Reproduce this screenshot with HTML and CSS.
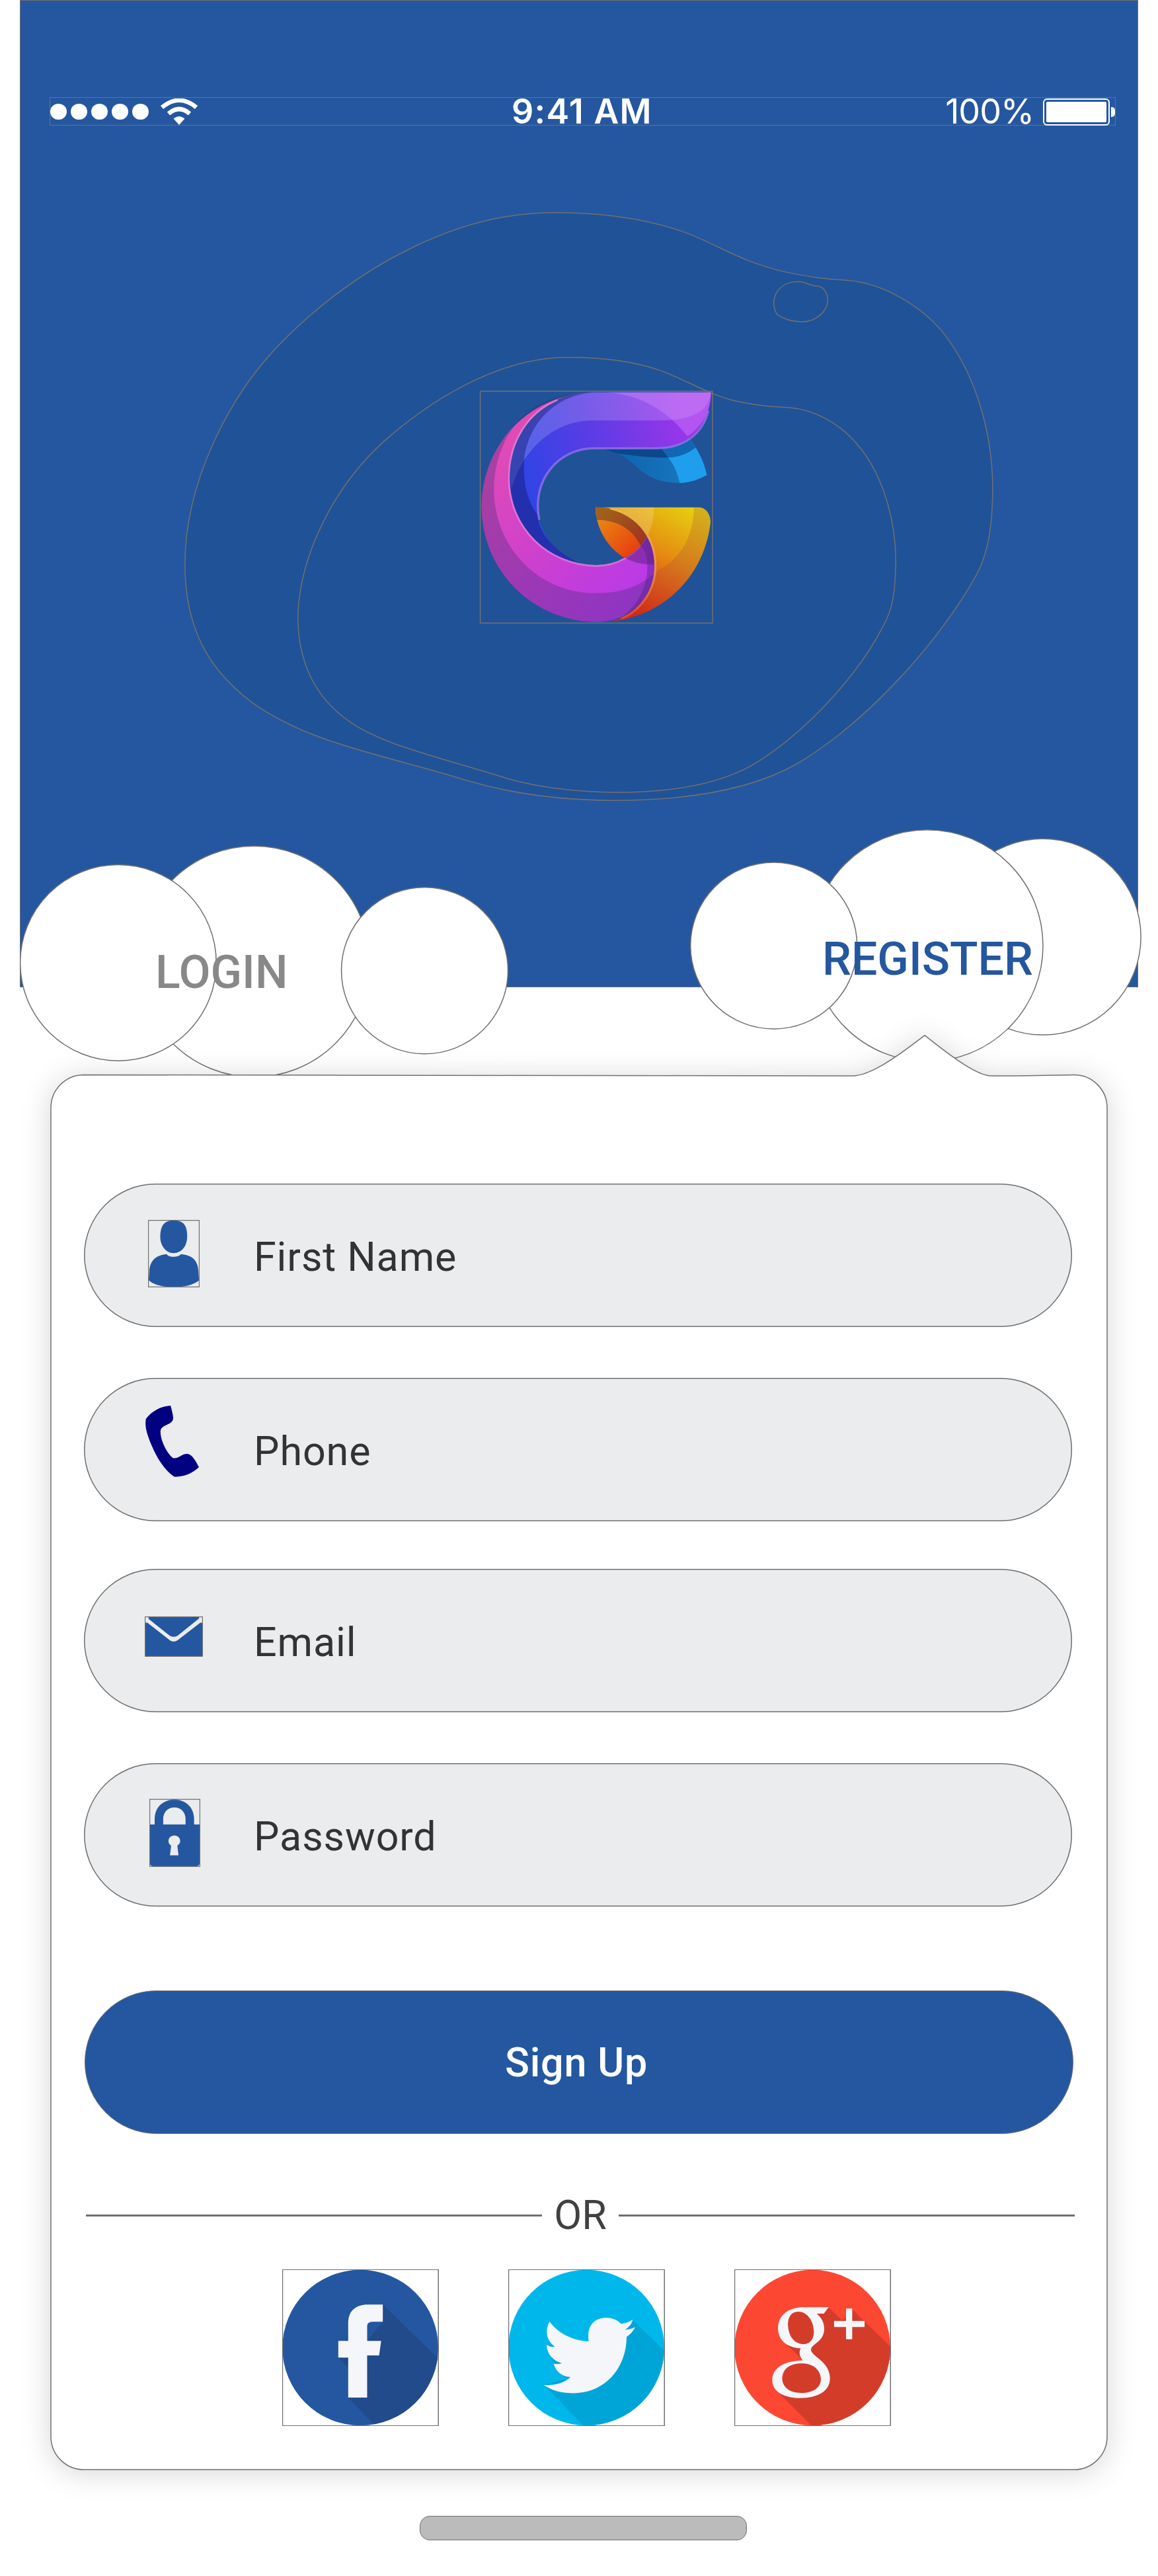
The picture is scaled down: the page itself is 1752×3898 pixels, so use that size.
FILE: index.html
```html
<!DOCTYPE html>
<html lang="en">
<head>
<meta charset="utf-8">
<title>Register</title>
<link rel="stylesheet" href="styles.css">
</head>
<body>
<main class="screen">
  <header class="hero">
    <div class="status">
      <div class="signal">
        <i class="dot"></i><i class="dot"></i><i class="dot"></i><i class="dot"></i><i class="dot"></i>
        <svg class="wifi" viewBox="0 0 58 40" preserveAspectRatio="none">
          <path d="M29 40 L20.500 30.500 Q29 23.500 37.500 30.500Z" fill="#fff"/>
          <path d="M13 23 Q29 9 45 23" fill="none" stroke="#fff" stroke-width="6.500"/>
          <path d="M3 13.500 Q29 -8 55 13.500" fill="none" stroke="#fff" stroke-width="6.500"/>
        </svg>
      </div>
      <span class="time">9:41 AM</span>
      <div class="power">
        <span class="percent">100%</span>
        <span class="battery"><i class="charge"></i></span>
        <i class="nub"></i>
      </div>
    </div>
    <svg class="blobs" viewBox="0 0 1568 1568" preserveAspectRatio="none">
      <path d="M735 68C830 68 900 85 960 115C1020 145 1060 190 1140 215C1190 230 1215 232 1250 236C1310 243 1380 300 1420 375C1475 480 1500 620 1501 745C1501 830 1495 910 1470 970C1410 1120 1290 1320 1160 1430C1080 1495 970 1521 838 1521C740 1520 650 1500 580 1470C430 1405 310 1380 210 1280C130 1195 92 1090 92 935C93 740 165 520 270 375C400 195 570 68 735 68Z"/>
      <path d="M760 426C830 426 880 438 920 458C965 480 1000 515 1050 533C1090 546 1120 548 1147 550C1195 556 1240 595 1270 650C1310 720 1332 830 1332 930C1331 1000 1328 1045 1310 1090C1265 1215 1170 1360 1080 1435C1020 1482 940 1501 846 1501C770 1500 705 1487 655 1467C540 1415 435 1385 375 1322C315 1260 289 1170 289 1065C292 920 350 740 450 620C540 512 650 426 760 426Z"/>
      <path d="M1160 239C1175 237 1180 249 1195 250C1210 252 1214 275 1213 290C1211 310 1195 338 1168 338C1150 338 1135 330 1125 320C1110 285 1125 240 1160 239Z"/>
    </svg>
    <svg class="logo" viewBox="0 0 1200 1200">
      <defs>
        <linearGradient id="ribbon" gradientUnits="userSpaceOnUse" x1="300" y1="460" x2="1050" y2="300"><stop offset="0" stop-color="#3344e5"/><stop offset=".35" stop-color="#543de4"/><stop offset="1" stop-color="#9e35ea"/></linearGradient>
        <linearGradient id="pink" gradientUnits="userSpaceOnUse" x1="220" y1="250" x2="850" y2="900"><stop offset="0" stop-color="#e04bb4"/><stop offset=".6" stop-color="#cb3fd2"/><stop offset="1" stop-color="#b93ae6"/></linearGradient>
        <linearGradient id="amber" gradientUnits="userSpaceOnUse" x1="1040" y1="590" x2="780" y2="1080"><stop offset="0" stop-color="#e6d010"/><stop offset=".45" stop-color="#e58b12"/><stop offset="1" stop-color="#e01c12"/></linearGradient>
        <linearGradient id="leaf" gradientUnits="userSpaceOnUse" x1="620" y1="630" x2="780" y2="800"><stop offset="0" stop-color="#e88a12"/><stop offset="1" stop-color="#e83e10"/></linearGradient>
        <linearGradient id="tail" x1="0" x2="1"><stop offset="0" stop-color="#0d5fae"/><stop offset="1" stop-color="#1b7cc0"/></linearGradient>
        <linearGradient id="rim" gradientUnits="userSpaceOnUse" x1="0" y1="600" x2="0" y2="1107"><stop offset="0" stop-color="#e9b84a"/><stop offset=".55" stop-color="#e8904a"/><stop offset="1" stop-color="#e0402a"/></linearGradient>
      </defs>
      <rect class="outline" x="80" y="66" width="1054" height="1052"/>
      <path fill="url(#tail)" d="M630 327C700 340 740 360 790 410C850 465 910 482 985 482C1030 482 1075 465 1108 446C1098 385 1065 325 1025 272L880 320Z"/>
      <path fill="#1f9eee" d="M933 367C960 400 975 440 985 482C1030 482 1075 465 1108 446C1098 400 1080 360 1057 322C1020 350 980 365 933 367Z"/>
      <path fill="#0b478a" d="M640 327H905L933 367C850 369 740 355 690 344Z"/>
      <path fill="#1167b3" d="M903 327C960 325 1000 305 1025 272L1057 322C1020 350 980 366 933 367Z"/>
      <path fill="url(#ribbon)" d="M1127 71H600C380 71 213 250 213 460C213 650 340 820 540 852C420 800 340 710 340 590C340 440 450 325 595 325H880C1020 325 1127 220 1127 71Z"/>
      <path fill="#fff" opacity=".17" d="M590 71H1127C1115 155 1050 197 890 199H590C430 199 280 310 222 510C180 270 370 71 590 71Z"/>
      <path fill="#d88cff" opacity=".38" d="M650 71C830 80 950 180 1020 270C1090 225 1127 150 1127 71Z"/>
      <path fill="#09145c" opacity=".4" d="M600 71C370 71 213 250 213 460C213 650 340 820 540 852C430 800 345 720 340 628C285 550 272 460 280 370C300 205 430 78 600 71Z"/>
      <path fill="none" stroke="#9d72ef" stroke-width="10" d="M348 650C310 465 440 325 595 325H880C1010 325 1090 255 1115 155" opacity=".75"/>
      <path fill="url(#pink)" d="M540 75C270 110 86 330 86 592A521 521 0 0 0 607 1113C760 1113 872 1000 872 860C872 800 855 750 835 725C790 810 700 861 605 861C400 857 211 690 211 460C211 260 350 95 540 75Z"/>
      <path fill="#3b2a76" opacity=".32" d="M540 75C270 110 86 330 86 592A521 521 0 0 0 607 1113C760 1113 872 1000 868 895C780 970 690 983 600 983C350 983 142 780 142 510C142 340 230 180 360 120C420 88 480 82 540 75Z"/>
      <path fill="none" stroke="#e57bd8" stroke-width="8" opacity=".85" d="M430 106C300 160 210 290 210 460C210 690 390 855 605 859C700 859 790 810 835 725"/>
      <path fill="url(#leaf)" d="M602 593H640C740 600 800 660 835 725C815 765 775 805 735 822C660 780 605 690 602 593Z"/>
      <path fill="#35242f" opacity=".4" d="M602 593H640C740 600 800 660 835 725L808 767C770 690 700 650 609 650Z"/>
      <path fill="#37185f" opacity=".38" d="M835 725C870 780 872 820 868 853C820 853 770 845 735 820C775 805 815 765 835 725Z"/>
      <path fill="#4d2088" opacity=".4" d="M835 725C880 800 880 900 850 970C820 1045 770 1090 700 1108C790 1050 836 960 838 870C840 820 830 790 808 767Z"/>
      <path fill="url(#amber)" d="M640 593H1070C1105 593 1125 625 1125 660C1100 890 930 1080 680 1110C800 1070 876 980 876 860C876 710 780 610 640 593Z"/>
      <path fill="#fff" opacity=".18" d="M650 593H868C868 640 860 680 838 722C800 650 730 605 650 593Z"/>
      <path fill="#a24b3c" opacity=".25" d="M1050 593H1070C1105 593 1125 625 1125 660C1100 890 930 1080 680 1110C800 1070 866 980 876 885C985 830 1045 740 1050 593Z"/>
      <path fill="none" stroke="url(#rim)" stroke-width="9" d="M670 598C800 630 875 735 875 860C874 970 810 1060 720 1099"/>
    </svg>
  </header>

  <nav class="tabs">
    <svg class="bubbles" viewBox="0 1240 1752 400">
      <g fill="#fff" stroke="#707070" stroke-width="1.500">
        <circle cx="384.400" cy="1455" r="174.700"/>
        <circle cx="178.900" cy="1456.900" r="148.300"/>
        <circle cx="642.500" cy="1468.700" r="126"/>
        <circle cx="1577.700" cy="1417.700" r="148.400"/>
        <circle cx="1402.800" cy="1431" r="175.200"/>
        <circle cx="1170.700" cy="1431" r="126"/>
      </g>
    </svg>
    <a class="tab tab-login">LOGIN</a>
    <a class="tab tab-register">REGISTER</a>
  </nav>

  <section class="card">
    <svg class="panel" viewBox="0 1500 1752 2398">
      <defs><filter id="soft" filterUnits="userSpaceOnUse" x="0" y="1500" width="1752" height="2398"><feDropShadow dx="0" dy="4" stdDeviation="22" flood-color="#000" flood-opacity=".16"/></filter></defs>
      <path filter="url(#soft)" fill="#fff" stroke="#707070" stroke-width="1.500" d="M125 1626.500L1290 1628C1314 1628 1350 1605 1399 1566.700C1447 1605 1480 1628 1500 1628C1550 1628 1590 1627 1625 1626.500A50 50 0 0 1 1675 1676.500V3687A50 50 0 0 1 1625 3737H127A50 50 0 0 1 77 3687V1676.500A50 50 0 0 1 125 1626.500Z"/>
    </svg>
    <form class="form">
      <label class="field">
        <span class="icon"><svg class="i-user" viewBox="367 227 174 264" preserveAspectRatio="none">
          <path d="M453 229C485 229 499 245 499 292C499 330 480 357 453 357C428 357 408 330 408 292C409 245 423 229 453 229Z"/>
          <path d="M430 361C435 375 470 375 478 361C520 365 536 390 537 430L539 464C520 482 490 490 453 490C415 490 385 480 369 463L371 430C373 390 390 365 430 361Z"/>
          <rect class="outline" x="368" y="228" width="172" height="262"/>
        </svg></span><span class="name">First Name</span>
      </label>
      <label class="field gap-b">
        <span class="icon"><svg class="i-phone" viewBox="356 961 183 281" preserveAspectRatio="none">
          <path d="M443 961C448 980 452 1000 452 1010C451 1038 420 1032 410 1055C404 1085 430 1150 451 1167C470 1172 480 1150 500 1151C518 1153 530 1185 539 1203C520 1225 490 1242 456 1241C430 1222 402 1180 380 1120C365 1078 355 1045 360 1013C380 982 410 963 443 961Z"/>
        </svg></span><span class="name">Phone</span>
      </label>
      <label class="field">
        <span class="icon"><svg class="i-mail" viewBox="357 279 197 159" preserveAspectRatio="none">
          <path d="M370 280H541V287L468 355Q455 363 442 355L370 289Z"/>
          <path d="M359 304H366L441 372Q455 384 469 372L545 304H553V432Q551 437 547 437H363Q359 436 359 432Z"/>
          <rect class="outline" x="358" y="280" width="195" height="157"/>
        </svg></span><span class="name">Email</span>
      </label>
      <label class="field gap-c">
        <span class="icon"><svg class="i-lock" viewBox="371 1000 173 269" preserveAspectRatio="none">
          <path fill-rule="evenodd" d="M389 1101V1078C390 1030 420 1003 456 1003C492 1003 522 1030 523 1078V1101H542V1255Q540 1267 526 1267H387Q373 1265 372 1255V1101ZM418 1101H494V1078C493 1052 478 1034 456 1034C434 1034 419 1052 418 1078ZM445 1185L441 1223H470L466 1185C484 1172 475 1145 456 1145C435 1145 429 1173 445 1185Z"/>
          <rect class="outline" x="372" y="1001" width="171" height="267"/>
        </svg></span><span class="name">Password</span>
      </label>
      <button class="submit" type="button">Sign Up</button>
    </form>
    <div class="divider"><i class="rule"></i><span class="or">OR</span><i class="rule"></i></div>
    <div class="social">
      <svg class="badge" viewBox="43 102 380 712" preserveAspectRatio="none">
        <clipPath id="c1"><ellipse cx="232.500" cy="458" rx="189" ry="354"/></clipPath>
        <ellipse cx="232.500" cy="458" rx="189" ry="354" fill="#2457a0"/>
        <path clip-path="url(#c1)" fill="#214b8a" d="M287 262L423 510V814H269L203 685V550L179 503L249 427L287 340Z"/>
        <path fill="#f4f6fa" d="M287 262V340H262Q249 340 249 360V427H283L278 493H249V685H203V503H179V427H203V340Q205 270 245 262Z"/>
        <rect class="outline" x="43.800" y="103" width="378" height="710"/>
      </svg>
      <svg class="badge" viewBox="590 102 380 712" preserveAspectRatio="none">
        <clipPath id="c2"><ellipse cx="779.500" cy="458" rx="189" ry="354"/></clipPath>
        <ellipse cx="779.500" cy="458" rx="189" ry="354" fill="#00b7ec"/>
        <path clip-path="url(#c2)" fill="#00a5d8" d="M892 330L970 474V814H773L676 628L741 592L727 597L701 532L683 445L820 440Z"/>
        <path fill="#f4f6fa" d="M690 339C710 390 745 426 785 429C780 360 797 322 829 322C845 322 856 335 864 350Q880 345 892 330Q890 355 873 377Q888 374 898 365Q890 393 877 409C877 540 830 665 746 665C718 665 695 652 676 628C700 630 724 622 741 592C722 590 706 570 700 531Q710 534 720 529C700 518 684 490 683 445Q692 455 703 454C683 425 678 382 690 339Z"/>
        <rect class="outline" x="590.800" y="103" width="378" height="710"/>
      </svg>
      <svg class="badge" viewBox="1137 102 380 712" preserveAspectRatio="none">
        <clipPath id="c3"><ellipse cx="1326.500" cy="458" rx="189" ry="354"/></clipPath>
        <ellipse cx="1326.500" cy="458" rx="189" ry="354" fill="#fc4732"/>
        <path clip-path="url(#c3)" fill="#d43c2a" d="M1366 275L1400 337L1423 282L1453 340L1517 455V814H1325L1246 665L1262 540L1303 515L1262 440L1270 300L1300 285Z"/>
        <path fill="#f4f6fa" fill-rule="evenodd" d="M1303 274H1366L1354 303H1337C1350 325 1355 345 1355 372C1355 435 1323 440 1323 468C1325 500 1369 520 1369 598C1369 655 1340 687 1297 687C1255 687 1229 655 1229 605C1229 550 1258 518 1303 516C1295 497 1293 480 1298 461C1262 457 1243 420 1243 370C1243 315 1265 276 1303 274ZM1292 294C1275 294 1267 320 1267 352C1268 405 1282 441 1305 442C1322 442 1330 415 1330 385C1329 335 1314 294 1292 294ZM1300 529C1270 529 1253 558 1253 598C1254 640 1272 664 1300 664C1328 664 1347 640 1347 600C1346 558 1328 529 1300 529Z"/>
        <path fill="#f4f6fa" d="M1408 280H1423V336H1453V364H1423V420H1408V364H1379V336H1408Z"/>
        <rect class="outline" x="1137.800" y="103" width="378" height="710"/>
      </svg>
    </div>
  </section>
  <div class="home-bar"></div>
</main>
</body>
</html>
```

FILE: styles.css
```css
* { box-sizing: border-box; }

body {
  margin: 0;
  background: #fff;
  font-family: Roboto, "Liberation Sans", sans-serif;
}

svg { display: block; }

.screen {
  position: relative;
  width: 1752px;
  height: 3898px;
  display: flex;
  flex-direction: column;
  align-items: center;
  overflow: hidden;
}

.outline {
  fill: none;
  stroke: #707070;
  stroke-width: 1.5px;
  vector-effect: non-scaling-stroke;
}

/* Hero */
.hero {
  position: relative;
  width: 1692px;
  height: 1494px;
  flex: none;
  padding: 146px 33px 0 44px;
  background: #2457a0;
  border: 1px solid #707070;
}

.status {
  height: 43px;
  display: grid;
  grid-template-columns: 698px 1fr auto;
  align-items: center;
  border: 1px solid #707070;
  color: #fff;
  font-family: Inter, "Liberation Sans", sans-serif;
  font-size: 52px;
  line-height: 42px;
}

.signal { display: flex; align-items: center; gap: 6.5px; }
.dot { width: 24.5px; height: 24.5px; border-radius: 50%; background: #fff; }
.wifi { width: 58px; height: 40px; margin-left: 11px; }
.time { font-weight: 600; letter-spacing: 1.3px; }
.power { display: flex; align-items: center; justify-content: flex-end; }
.percent { margin-right: 14px; letter-spacing: -1px; }

.battery {
  width: 101px;
  height: 41px;
  padding: 3px;
  border: 2px solid #fff;
  border-radius: 6px;
}

.charge { display: block; height: 100%; background: #fff; border-radius: 2px; }
.nub { width: 6px; height: 15px; margin-left: 2px; background: #fff; border-radius: 0 5px 5px 0; }

.blobs {
  position: absolute;
  left: 169px;
  top: 279px;
  width: 1360px;
  height: 960px;
}

.blobs path {
  fill: #205298;
  stroke: #707070;
  stroke-width: 1.5px;
  vector-effect: non-scaling-stroke;
}

.logo {
  position: absolute;
  left: 669px;
  top: 569px;
  width: 400px;
  height: 400px;
}

/* Tabs over the cloud shapes */
.tabs {
  position: absolute;
  left: 0;
  top: 1240px;
  width: 1752px;
  height: 400px;
}

.bubbles { width: 1752px; height: 400px; }

.tab {
  position: absolute;
  font-size: 69.8px;
  font-weight: 500;
  line-height: 80px;
}

.tab-login { left: 235px; top: 191px; color: #888; }
.tab-register { left: 1244px; top: 171px; color: #2457a0; }

/* Form card */
.card {
  position: relative;
  width: 1598px;
  height: 2110px;
  margin-top: 133px;
  flex: none;
  padding: 164px 53px 0 50px;
}

.panel {
  position: absolute;
  left: -77px;
  top: -127px;
  width: 1752px;
  height: 2398px;
}

.form { position: relative; display: flex; flex-direction: column; }

.field {
  display: flex;
  align-items: center;
  height: 217px;
  margin-bottom: 77px;
  padding-left: 44px;
  background: #ebecee;
  box-shadow: inset 0 0 0 1.5px #707070;
  border-radius: 109px;
}

.field.gap-b { margin-bottom: 72px; }
.field.gap-c { margin-bottom: 127px; }

.icon {
  width: 213px;
  height: 100%;
  display: flex;
  flex: none;
  align-items: flex-start;
  fill: #2457a0;
}

.i-user { width: 78px; height: 102px; margin: 55px 0 0 53px; }
.i-phone { width: 82px; height: 108px; margin: 42px 0 0 48px; fill: navy; }
.i-mail { width: 88px; height: 61px; margin: 72px 0 0 48px; }
.i-lock { width: 77px; height: 103px; margin: 54px 0 0 55px; }

.name {
  padding-top: 4px;
  color: #333;
  font-size: 61px;
  line-height: 72px;
  letter-spacing: 0.9px;
}

.submit {
  width: 1496px;
  height: 217px;
  margin-left: 1px;
  padding: 1px 8px 0 0;
  background: #2457a0;
  border: 1px solid #707070;
  border-radius: 109px;
  color: #fff;
  font: 500 61px/72px Roboto, "Liberation Sans", sans-serif;
  letter-spacing: 0.8px;
}

.divider {
  position: relative;
  display: flex;
  align-items: center;
  width: 1496px;
  height: 72px;
  margin: 87px 0 0 3px;
}

.rule { flex: 1; height: 3px; background: #707070; }
.or { width: 116px; text-align: center; color: #404040; font-size: 61px; line-height: 72px; }

.social {
  position: relative;
  display: flex;
  gap: 105px;
  margin: 46px 0 0 300px;
}

.badge { width: 237px; height: 237px; }

.home-bar {
  width: 495px;
  height: 37px;
  flex: none;
  margin: 70px 0 0 12px;
  background: #bbb;
  border: 1px solid #707070;
  border-radius: 15px;
}
```
